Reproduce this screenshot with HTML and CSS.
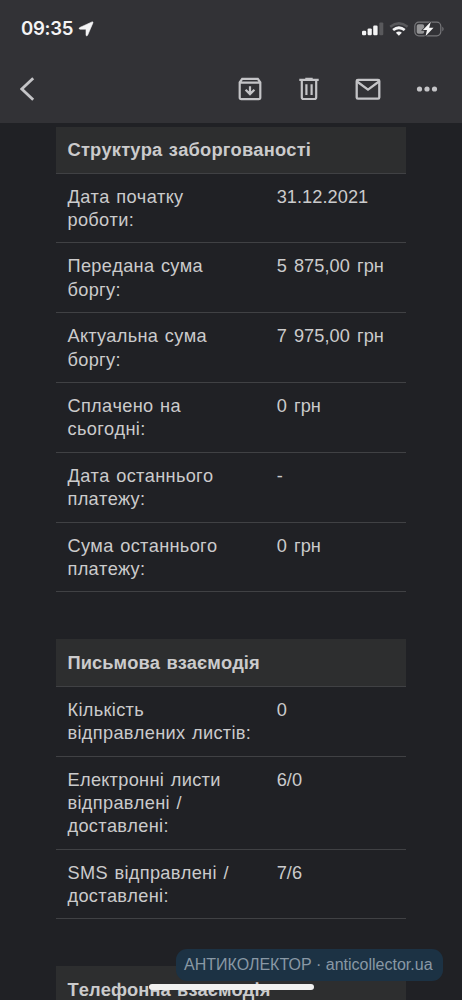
FILE: index.html
```html
<!DOCTYPE html>
<html lang="uk">
<head>
<meta charset="utf-8">
<meta name="viewport" content="width=device-width, initial-scale=1">
<title>Структура заборгованості</title>
<link rel="stylesheet" href="styles.css">
</head>
<body>
<div class="screen">
  <header class="top">
    <div class="status">
      <div class="clock"><span>09:35</span>
        <svg class="location" width="16" height="16" viewBox="0 0 16 16"><path d="M14 .9Q15.3.6 14.9 1.9L9.6 14.3Q8.5 16 8 14V8.2H2.2Q0 7.8 1.8 6.5Z" fill="#f4f4f5" stroke="#f4f4f5" stroke-width=".6"/></svg>
      </div>
      <div class="indicators">
        <svg width="22" height="14" viewBox="0 0 22 14"><g fill="#f4f4f5"><rect x="0" y="8.8" width="4.2" height="4.5" rx="1.2"/><rect x="5.6" y="6.4" width="4.2" height="6.9" rx="1.2"/><rect x="11.2" y="3.5" width="4.4" height="9.8" rx="1.2"/></g><rect x="17.3" y=".4" width="4" height="12.9" rx="1.2" fill="#59595c"/></svg>
        <svg width="20" height="14" viewBox="0 0 20 14" fill="none"><path d="M1.2 4.7Q9.9-2 18.6 4.7" stroke="#59595c" stroke-width="2.5"/><path d="M4.1 8Q9.9 3.4 15.7 8" stroke="#f4f4f5" stroke-width="2.8"/><path d="M6.9 10.7Q9.9 8.3 12.9 10.7L9.9 13.7Z" fill="#f4f4f5"/></svg>
        <svg width="31" height="16" viewBox="0 0 31 16"><rect x=".8" y="1.2" width="26" height="13.6" rx="4" fill="none" stroke="#77777a" stroke-width="1.2"/><path d="M28.3 5.5Q31 8 28.3 10.5Z" fill="#77777a"/><rect x="2.7" y="3.2" width="7.5" height="9.6" rx="1.8" fill="#949496"/><path d="M16.8.7 8.9 9H13L11.5 15.3 19.5 6.8H15.2Z" fill="#f6f6f6" stroke="#323236" stroke-width="1.6" paint-order="stroke"/></svg>
      </div>
    </div>
    <nav class="toolbar">
      <svg class="back" width="15" height="24" viewBox="0 0 15 24"><path d="M13.2 1.2 1.8 12 13.2 22.8" fill="none" stroke="#c4c4c7" stroke-width="2.8"/></svg>
      <div class="actions">
        <svg width="24" height="24" viewBox="0 0 24 24" fill="none" stroke="#c4c4c7" stroke-width="2.2"><path d="M1.7 5.3 4.2 1.8H19.8L22.3 5.3V20.5Q22.3 22.2 20.6 22.2H3.4Q1.7 22.2 1.7 20.5ZM1.7 5.7H22.3M12 9.2V16.5M7.6 12.7 12 17.1 16.4 12.7"/></svg>
        <svg width="20" height="24" viewBox="0 0 20 24" fill="none" stroke="#c4c4c7" stroke-width="2.2"><path d="M.3 2.9H19.7M6.3 1.8H13.7M2.8 4V20.3Q2.8 22 4.5 22H15.5Q17.2 22 17.2 20.3V4M7.4 7.2V18M12.6 7.2V18"/></svg>
        <svg width="26" height="24" viewBox="0 0 26 24" fill="none" stroke="#c4c4c7" stroke-width="2.3"><rect x="1.7" y="2.9" width="22.6" height="18.8" rx="1.2"/><path d="M2 4.5 13 12.6 24 4.5"/></svg>
        <svg width="22" height="24" viewBox="0 0 22 24" fill="#c4c4c7"><circle cx="3.5" cy="12" r="2.6"/><circle cx="11" cy="12" r="2.6"/><circle cx="18.5" cy="12" r="2.6"/></svg>
      </div>
    </nav>
  </header>
  <main class="content">
    <section class="block">
      <h2>Структура заборгованості</h2>
      <dl><dt>Дата початку<br>роботи:</dt><dd>31.12.2021</dd></dl>
      <dl><dt>Передана сума<br>боргу:</dt><dd>5 875,00 грн</dd></dl>
      <dl><dt>Актуальна сума<br>боргу:</dt><dd>7 975,00 грн</dd></dl>
      <dl><dt>Сплачено на<br>сьогодні:</dt><dd>0 грн</dd></dl>
      <dl><dt>Дата останнього<br>платежу:</dt><dd>-</dd></dl>
      <dl><dt>Сума останнього<br>платежу:</dt><dd>0 грн</dd></dl>
    </section>
    <section class="block">
      <h2>Письмова взаємодія</h2>
      <dl><dt>Кількість<br>відправлених листів:</dt><dd>0</dd></dl>
      <dl><dt>Електронні листи<br>відправлені /<br>доставлені:</dt><dd>6/0</dd></dl>
      <dl><dt>SMS відправлені /<br>доставлені:</dt><dd>7/6</dd></dl>
    </section>
    <section class="block">
      <h2>Телефонна взаємодія</h2>
    </section>
  </main>
  <div class="home-bar"></div>
  <div class="watermark">АНТИКОЛЕКТОР · anticollector.ua</div>
</div>
</body>
</html>
```
FILE: styles.css
```css
* { box-sizing: border-box; }
body { margin: 0; background: #202125; }
.screen {
  position: relative;
  width: 462px;
  height: 1000px;
  overflow: hidden;
  background: #202125;
  color: #cbcbcc;
  font-family: "Liberation Sans", Arial, sans-serif;
  font-kerning: none;
}
svg { display: block; flex: none; }
.top { height: 123px; background: #323236; padding-top: 17px; }
.status {
  display: flex;
  justify-content: space-between;
  align-items: center;
  height: 23px;
  padding: 0 17px 0 21px;
}
.clock {
  display: flex;
  align-items: center;
  gap: 4.5px;
  color: #f4f4f5;
  font: 600 18.6px/23px Inter, sans-serif;
  letter-spacing: -0.3px;
}
.indicators { display: flex; align-items: center; gap: 4.8px; }
.toolbar {
  display: flex;
  justify-content: space-between;
  align-items: center;
  height: 24px;
  margin-top: 37px;
  padding: 0 24px 0 20px;
}
.actions { display: flex; gap: 36.5px; }
.actions svg:nth-child(4) { margin-left: -1.5px; }
.content { padding: 4px 56px 0; }
.block { margin-bottom: 47px; }
h2 {
  height: 46.6px;
  margin: 0;
  padding: 11px 11.5px;
  background: #2d2e2f;
  border-bottom: 1px solid #404144;
  font-size: 18.3px;
  line-height: 23.27px;
  letter-spacing: .2px;
  word-spacing: 1.2px;
  white-space: nowrap;
}
.block + .block h2 {
  height: 47.4px;
  padding-top: 12px;
  letter-spacing: .08px;
}
dl {
  display: grid;
  grid-template-columns: 209.2px 1fr;
  height: 69.8px;
  margin: 0;
  padding: 12px 0 0 11.5px;
  border-bottom: 1px solid #404144;
  font-size: 18.2px;
  line-height: 23.4px;
  letter-spacing: .32px;
  word-spacing: 1.2px;
}
dl:has(br ~ br) { height: 93.1px; }
dt, dd { margin: 0; white-space: nowrap; }
dd { letter-spacing: .05px; word-spacing: 2px; }
.home-bar {
  position: absolute;
  left: 149px;
  top: 984px;
  width: 165px;
  height: 6px;
  border-radius: 3px;
  background: #f1f1f0;
}
.watermark {
  position: absolute;
  left: 176px;
  top: 949px;
  width: 267px;
  height: 32px;
  padding-left: 8px;
  border-radius: 11px;
  background: #1c3244;
  color: #8998a5;
  font-size: 16px;
  font-kerning: normal;
  line-height: 32px;
  white-space: nowrap;
}
```
